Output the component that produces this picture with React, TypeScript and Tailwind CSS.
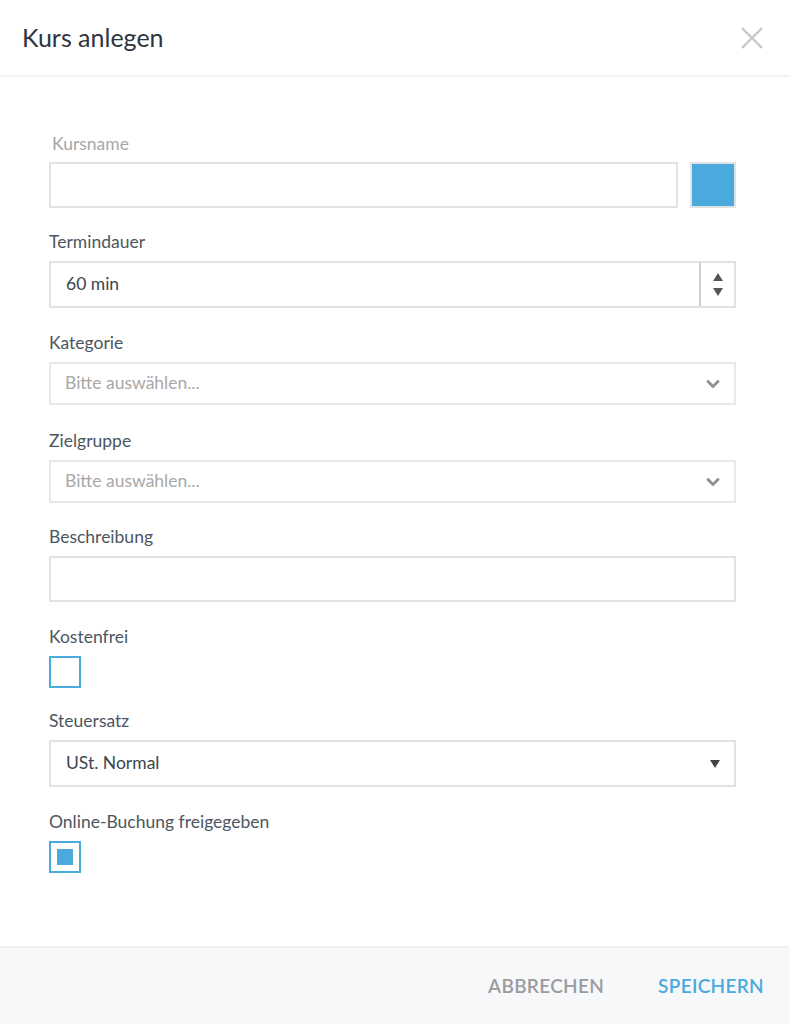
import { ChevronDown } from 'lucide-react'

const font = { fontFamily: '"Source Sans Pro", Lato, "Open Sans", sans-serif' }

function Label({ children, muted }: { children: React.ReactNode; muted?: boolean }) {
  return (
    <p className={`text-[17.5px] leading-[22px] ${muted ? 'mb-[7px] pl-[3px] text-[#a3a7ab]' : 'mb-[8px] text-[#4d5660]'}`}>
      {children}
    </p>
  )
}

function Auswahl() {
  return (
    <div className="flex h-[43px] items-center justify-between border-2 border-[#e8e8e8] pl-[14px] pr-[11px]">
      <span className="text-[17.5px] text-[#a8a8a8]">Bitte auswählen...</span>
      <ChevronDown size={20} strokeWidth={3.5} className="text-[#8e9296]" />
    </div>
  )
}

export default function App() {
  return (
    <div style={font} className="flex h-[1024px] w-[789px] flex-col bg-white">
      <div className="flex h-[77px] items-center justify-between border-b-2 border-[#f1f2f3] pl-[22px] pr-[26px]">
        <h1 className="text-[25px] text-[#2e3540]">Kurs anlegen</h1>
        <svg width="22" height="22" viewBox="0 0 22 22" className="text-[#c8c8c8]">
          <path d="M1 1 L21 21 M21 1 L1 21" stroke="currentColor" strokeWidth="2.4" />
        </svg>
      </div>

      <div className="flex-1 px-[49px] pt-[56px] pr-[53px]">
        <Label muted>Kursname</Label>
        <div className="flex gap-[12px]">
          <div className="h-[46px] flex-1 border-2 border-[#dfe3e6]" />
          <div className="h-[46px] w-[46px] border-2 border-[#dfe3e6] bg-[#4aaade]" />
        </div>

        <div className="mt-[23px]">
          <Label>Termindauer</Label>
          <div className="flex h-[47px] border-2 border-[#dfe3e6]">
            <div className="flex flex-1 items-center pl-[15px] text-[17.5px] text-[#3d454e]">60 min</div>
            <div className="flex w-[35px] flex-col items-center justify-center gap-[7px] border-l-2 border-[#cfcfcf]">
              <svg width="10" height="8" viewBox="0 0 10 8"><path d="M5 0 L10 8 L0 8 Z" fill="#555" /></svg>
              <svg width="10" height="8" viewBox="0 0 10 8"><path d="M0 0 L10 0 L5 8 Z" fill="#555" /></svg>
            </div>
          </div>
        </div>

        <div className="mt-[24px]">
          <Label>Kategorie</Label>
          <Auswahl />
        </div>

        <div className="mt-[25px]">
          <Label>Zielgruppe</Label>
          <Auswahl />
        </div>

        <div className="mt-[23px]">
          <Label>Beschreibung</Label>
          <div className="h-[46px] border-2 border-[#dfe3e6]" />
        </div>

        <div className="mt-[24px]">
          <Label>Kostenfrei</Label>
          <div className="h-[32px] w-[32px] border-2 border-[#4aaade]" />
        </div>

        <div className="mt-[22px]">
          <Label>Steuersatz</Label>
          <div className="flex h-[47px] items-center justify-between border-2 border-[#dfe3e6] pl-[15px] pr-[14px]">
            <span className="text-[17.5px] text-[#3d454e]">USt. Normal</span>
            <svg width="10" height="8" viewBox="0 0 10 8"><path d="M0 0 L10 0 L5 8 Z" fill="#444" /></svg>
          </div>
        </div>

        <div className="mt-[24px]">
          <Label>Online-Buchung freigegeben</Label>
          <div className="flex h-[32px] w-[32px] items-center justify-center border-2 border-[#4aaade]">
            <div className="h-[16px] w-[16px] bg-[#4aaade]" />
          </div>
        </div>
      </div>

      <div className="flex h-[78px] items-center justify-end gap-[54px] border-t-2 border-[#f0f1f3] bg-[#f7f8fa] pr-[25px]">
        <button className="text-[19px] font-semibold tracking-[0.3px] text-[#9a9ca0]">ABBRECHEN</button>
        <button className="text-[19px] font-semibold tracking-[0.3px] text-[#4aaade]">SPEICHERN</button>
      </div>
    </div>
  )
}
